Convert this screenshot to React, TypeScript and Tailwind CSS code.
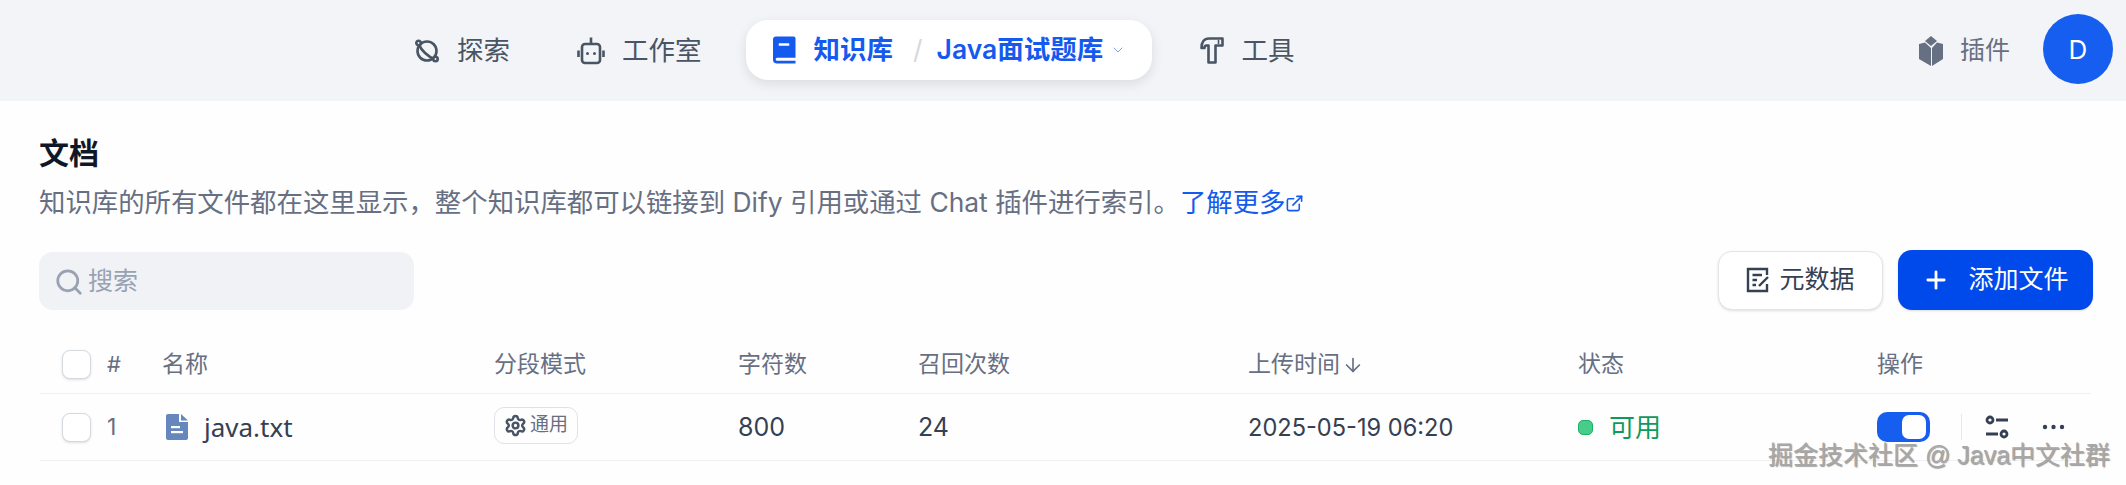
import { ArrowDown, ChevronDown, ExternalLink, Plus, Search, Settings } from "lucide-react";

const cjk = "font-['Inter','Noto_Sans_CJK_SC',sans-serif]";

function PlanetIcon() {
  return (
    <svg width="28" height="28" viewBox="0 0 28 28" fill="none" stroke="#495464" strokeWidth="2.6">
      <circle cx="14" cy="14" r="9.5" />
      <path d="M6 7.5C8 13 15 20 21.5 22" />
      <circle cx="5.5" cy="6" r="2.2" fill="#f2f4f7" />
      <circle cx="22.5" cy="22" r="2.2" fill="#f2f4f7" />
    </svg>
  );
}

function RobotIcon() {
  return (
    <svg width="28" height="30" viewBox="0 0 28 30" fill="none" stroke="#495464" strokeWidth="2.6">
      <rect x="5" y="8" width="18" height="19" rx="3" />
      <path d="M14 1.5V8M1.5 14.5V21M26.5 14.5V21" />
      <circle cx="10.5" cy="17.5" r="1.5" fill="#495464" stroke="none" />
      <circle cx="17.5" cy="17.5" r="1.5" fill="#495464" stroke="none" />
    </svg>
  );
}

function BookIcon() {
  return (
    <svg width="23" height="28" viewBox="0 0 24 28">
      <path
        fill="#155aef"
        d="M3 0H21.5C22.6 0 23.5 .9 23.5 2V22H4.5C3.4 22 2.8 22.8 2.8 23.6C2.8 24.4 3.4 25.2 4.5 25.2H23.5V28H3.5C1.5 28 0 26.5 0 24.5V3C0 1.3 1.3 0 3 0Z"
      />
      <rect x="6" y="7" width="11" height="2.6" rx=".6" fill="#fff" />
    </svg>
  );
}

function HammerIcon() {
  return (
    <svg width="24" height="27" viewBox="0 0 24 27" fill="none" stroke="#495464" strokeWidth="2.6" strokeLinejoin="round">
      <path d="M1.5 11C1.5 5 4 1.5 9 1.5H22.5V8.5H15.5V25.5H8.5V8.5H6.5C5 8.5 4.5 9.5 4.5 11Z" />
      <path d="M18.5 3V7" strokeWidth="1.6" />
    </svg>
  );
}

function PluginIcon() {
  return (
    <svg width="28" height="30" viewBox="0 0 28 30" fill="#676f83">
      <path d="M14 0L20 5L14 10L8 5Z" />
      <path d="M2 8L8 6.5L14 12V30L2 23Z" />
      <path d="M26 8L20 6.5L15 12V30L26 23Z" />
    </svg>
  );
}

function MetaIcon() {
  return (
    <svg width="24" height="26" viewBox="0 0 24 26" fill="none" stroke="#354052" strokeWidth="2.4">
      <path d="M21 8V2H2V24H21V17" />
      <path d="M6.5 8H16M6.5 13H11M6.5 18H10" />
      <path d="M13 19L22 10" />
    </svg>
  );
}

function DocIcon() {
  return (
    <svg width="22" height="26" viewBox="0 0 22 26">
      <path fill="#6687bd" d="M2 0H13V8H22V24C22 25.1 21.1 26 20 26H2C.9 26 0 25.1 0 24V2C0 .9 .9 0 2 0Z" />
      <path fill="#6687bd" d="M15 0L22 6.5H15Z" />
      <rect x="5" y="12" width="9" height="2.2" fill="#fff" />
      <rect x="5" y="17" width="12" height="2.2" fill="#fff" />
    </svg>
  );
}

function AdjustIcon() {
  return (
    <svg width="24" height="24" viewBox="0 0 24 24" fill="none" stroke="#354052" strokeWidth="2.8">
      <circle cx="5" cy="5" r="3" />
      <path d="M11 5H23M1 19H13" />
      <circle cx="19" cy="19" r="3" />
    </svg>
  );
}

function Dots() {
  return (
    <svg width="23" height="6" viewBox="0 0 23 6" fill="#354052">
      <circle cx="3" cy="3" r="2.2" />
      <circle cx="11.5" cy="3" r="2.2" />
      <circle cx="20" cy="3" r="2.2" />
    </svg>
  );
}

function Checkbox() {
  return <div className="h-[29px] w-[29px] rounded-[8px] border border-[#d5d9e0] bg-white shadow-sm" />;
}

const rowGrid = "grid grid-cols-[67px_55px_332px_244px_180px_330px_330px_299px_1fr] items-center";

export default function App() {
  return (
    <div className={`relative h-[485px] w-[2126px] overflow-hidden bg-[#fefefe] ${cjk}`}>
      <header className="flex h-[101px] items-center bg-[#f2f4f7] pl-[413px] pr-[13px] text-[26.5px] text-[#495464]">
        <div className="flex items-center gap-[16px]">
          <PlanetIcon />
          <span>探索</span>
        </div>
        <div className="ml-[67px] flex items-center gap-[17px]">
          <RobotIcon />
          <span>工作室</span>
        </div>
        <div className="-mt-[2px] ml-[44px] flex h-[60px] w-[406px] items-center rounded-[22px] bg-white pl-[27px] font-semibold text-[#155aef] shadow-[0_4px_12px_rgba(16,24,40,0.1)]">
          <BookIcon />
          <span className="ml-[18px]">知识库</span>
          <span className="ml-[20px] font-normal text-[#d5d9e0]">/</span>
          <span className="ml-[14px]">Java面试题库</span>
          <ChevronDown className="ml-[7px] text-[#7f9ff0]" size={16} strokeWidth={1.5} />
        </div>
        <div className="ml-[48px] flex items-center gap-[18px]">
          <HammerIcon />
          <span>工具</span>
        </div>
        <div className="ml-auto flex items-center gap-[15px] text-[25px] text-[#676f83]">
          <PluginIcon />
          <span>插件</span>
        </div>
        <div className="-mt-[3px] ml-[33px] flex h-[70px] w-[70px] items-center justify-center rounded-full bg-[#155eef] text-[26px] text-white">
          D
        </div>
      </header>

      <main className="pl-[39px] pr-[33px] pt-[37px]">
        <h1 className="text-[30px] font-bold leading-[30px] text-[#101828]">文档</h1>
        <p className="mt-[17px] text-[26.4px] leading-[34px] text-[#676f83]">
          知识库的所有文件都在这里显示，整个知识库都可以链接到 Dify 引用或通过 Chat 插件进行索引。
          <span className="text-[#155aef]">了解更多</span>
          <ExternalLink className="inline-block align-[-1px] text-[#155aef]" size={19} strokeWidth={2} />
        </p>

        <div className="mt-[31px] flex items-end justify-between">
          <div className="flex h-[58px] w-[375px] items-center rounded-[14px] bg-[#f0f2f5] pl-[15px] pt-[1px] text-[25px] text-[#98a2b2]">
            <Search size={30} strokeWidth={2.2} />
            <span className="ml-[4px] pt-[1px]">搜索</span>
          </div>
          <div className="flex items-center gap-[15px]">
            <button className="flex h-[59px] w-[165px] items-center justify-center gap-[9px] rounded-[14px] border border-[#e3e5e9] bg-white text-[25px] text-[#354052] shadow-sm">
              <MetaIcon />
              元数据
            </button>
            <button className="flex h-[60px] w-[195px] items-center justify-center gap-[18px] rounded-[14px] bg-[#004aeb] text-[25px] text-white shadow-sm">
              <Plus size={28} strokeWidth={2.4} />
              添加文件
            </button>
          </div>
        </div>

        <div className="mt-[19px] w-[2052px] pl-[1px]">
          <div className={`${rowGrid} h-[65px] border-b border-[#eef0f3] pt-[7px] text-[23px] text-[#676f83]`}>
            <div className="pl-[22px]"><Checkbox /></div>
            <div className="text-[22px]">#</div>
            <div>名称</div>
            <div>分段模式</div>
            <div>字符数</div>
            <div>召回次数</div>
            <div className="flex items-center gap-[2px]">
              上传时间
              <ArrowDown size={22} strokeWidth={1.8} />
            </div>
            <div>状态</div>
            <div>操作</div>
          </div>
          <div className={`${rowGrid} h-[67px] border-b border-[#eef0f3] text-[25px] text-[#354052]`}>
            <div className="pl-[22px]"><Checkbox /></div>
            <div className="text-[23px] text-[#676f83]">1</div>
            <div className="flex items-center gap-[16px] pl-[4px]">
              <DocIcon />
              <span className="font-['Noto_Sans',sans-serif] text-[26px]">java.txt</span>
            </div>
            <div>
              <span className="inline-flex h-[37px] w-[84px] items-center justify-center gap-[3px] rounded-[10px] border border-[#dfe2e7] text-[19px] text-[#676f83]">
                <Settings size={23} strokeWidth={2.6} className="text-[#495464]" />
                通用
              </span>
            </div>
            <div className="pt-[2px]">800</div>
            <div className="pt-[2px]">24</div>
            <div className="pt-[2px] text-[23.6px]">2025-05-19 06:20</div>
            <div className="flex items-center gap-[16px] pt-[1px] text-[26px] text-[#0e9a5d]">
              <span className="h-[15px] w-[15px] rounded-[5px] border border-[#17b26a] bg-[#47cd89]" />
              可用
            </div>
            <div className="flex items-center">
              <div className="flex h-[30px] w-[53px] items-center justify-end rounded-[10px] bg-[#155eef] pr-[4px]">
                <div className="h-[24px] w-[24px] rounded-[7px] bg-white" />
              </div>
              <div className="ml-[31px] h-[26px] w-px bg-[#e6e8ec]" />
              <div className="ml-[23px]"><AdjustIcon /></div>
              <div className="ml-[33px]"><Dots /></div>
            </div>
          </div>
        </div>
      </main>

      <div className="absolute left-[1768px] top-[441px] whitespace-nowrap font-['Liberation_Sans','Noto_Sans_CJK_SC',sans-serif] text-[25px] leading-[28px] text-[#a8a8a8] [text-shadow:1px_1px_1px_rgba(0,0,0,0.4)]">
        掘金技术社区 @ Java中文社群
      </div>
    </div>
  );
}
